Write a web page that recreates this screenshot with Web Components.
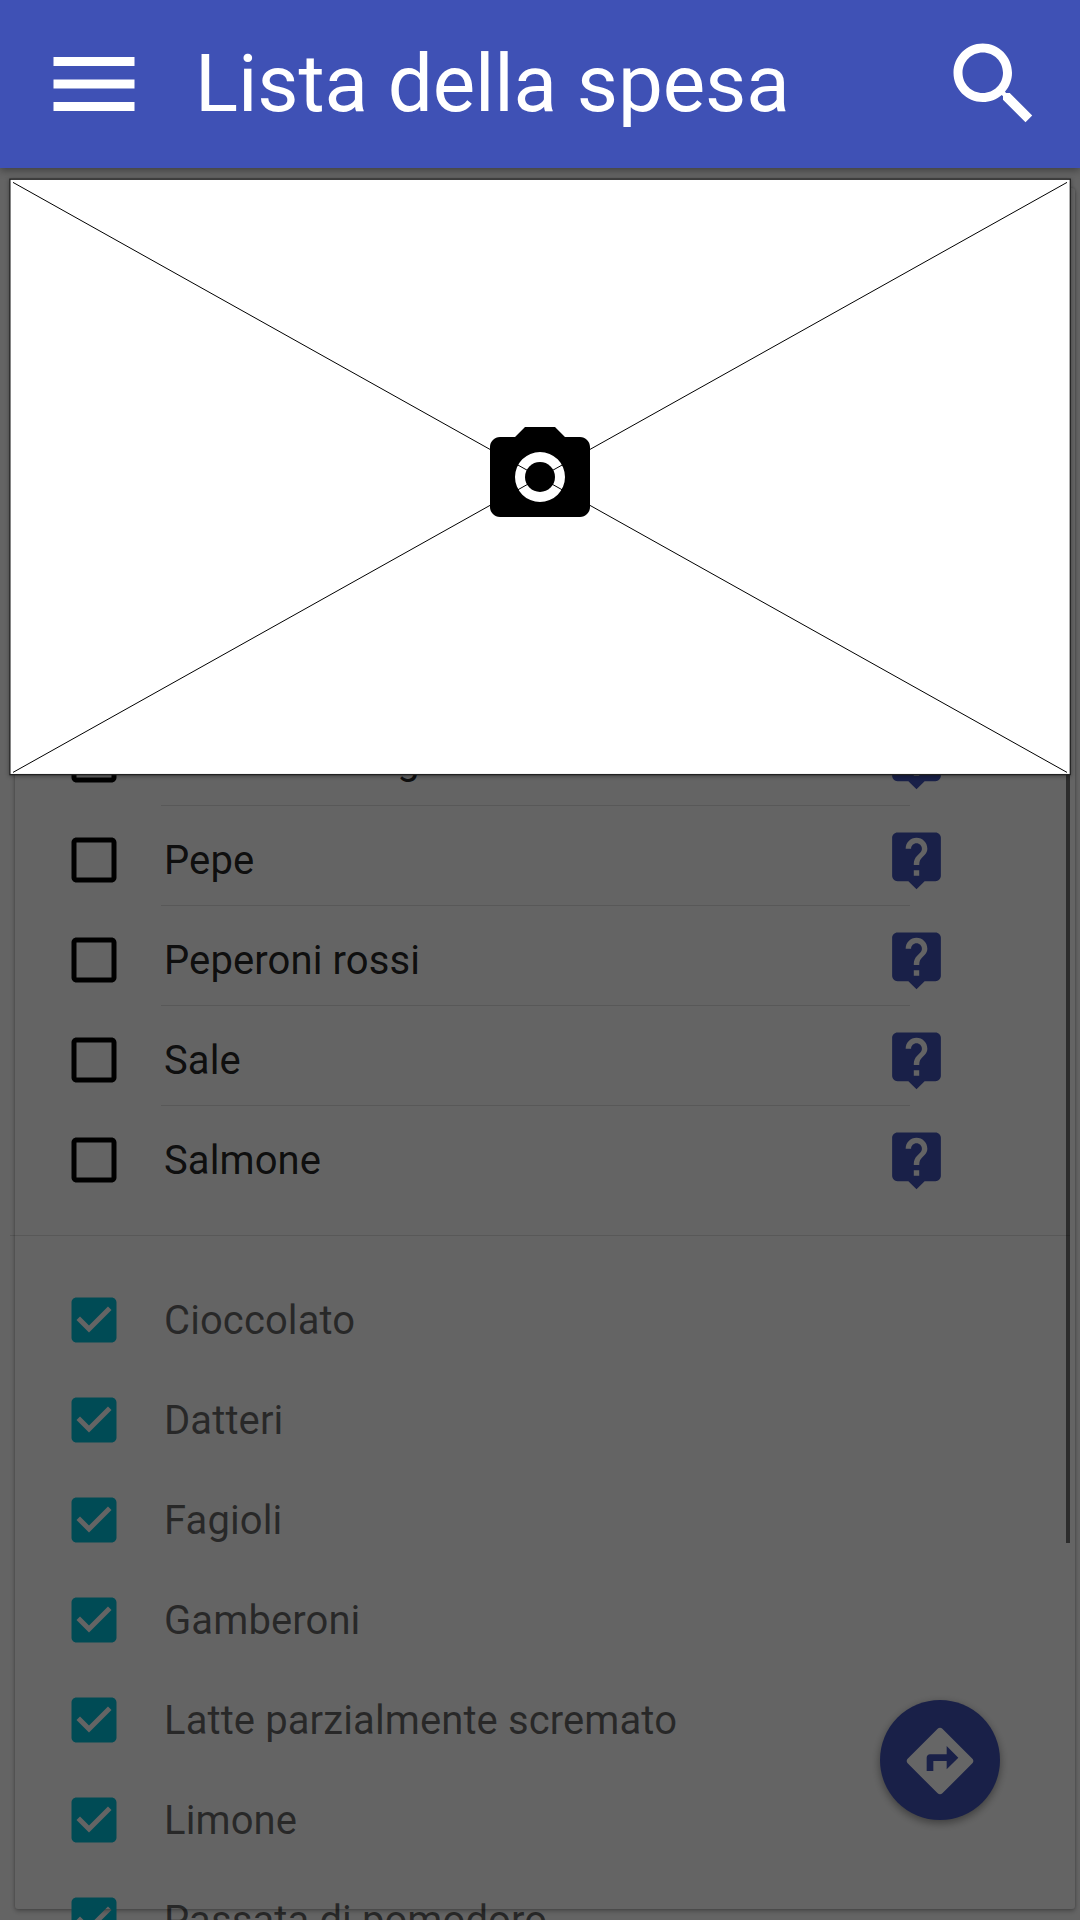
<!DOCTYPE html>
<html lang="it">
<head>
<meta charset="utf-8">
<title>Lista della spesa</title>
<style>
html,body{margin:0;height:1920px;overflow:hidden;background:#fafafa;font-family:Roboto,sans-serif}
</style>
</head>
<body>
<shopping-app>
  <app-bar slot="bar">Lista della spesa</app-bar>
  <photo-frame slot="photo"></photo-frame>
  <list-group slot="list" divided>
    <list-item>Olio extra vergine</list-item>
    <list-item>Pepe</list-item>
    <list-item>Peperoni rossi</list-item>
    <list-item>Sale</list-item>
    <list-item>Salmone</list-item>
  </list-group>
  <list-group slot="list">
    <list-item checked>Cioccolato</list-item>
    <list-item checked>Datteri</list-item>
    <list-item checked>Fagioli</list-item>
    <list-item checked>Gamberoni</list-item>
    <list-item checked>Latte parzialmente scremato</list-item>
    <list-item checked>Limone</list-item>
    <list-item checked>Passata di pomodoro</list-item>
  </list-group>
  <fab-button slot="fab"></fab-button>
</shopping-app>
<script>
const define = (name, html) => customElements.define(name, class extends HTMLElement {
  constructor() {
    super();
    this.attachShadow({mode: 'open'});
    this.shadowRoot.innerHTML = html;
  }
});

define('shopping-app', `
<style>
:host{display:flex;flex-direction:column;position:relative;width:1080px;height:1920px;overflow:hidden;background:#fafafa}
main{flex:1;min-height:0;position:relative;overflow:hidden}
.card{position:absolute;left:15px;top:20px;width:1060px;height:1721px;background:#fafafa;border-radius:3px;box-shadow:0 2px 5px rgba(0,0,0,.28),0 0 3px rgba(0,0,0,.2)}
.scroll{position:relative;margin:0 10px;padding-top:537px}
.thumb{position:absolute;left:1066px;top:20px;width:4px;height:1355px;background:rgba(0,0,0,.56)}
.shade{position:absolute;inset:0;background:rgba(0,0,0,.6)}
slot[name=fab]::slotted(*){position:absolute;left:880px;top:1532px}
slot[name=photo]::slotted(*){position:absolute;left:9px;top:10px}
</style>
<slot name="bar"></slot>
<main>
  <div class="card"></div>
  <div class="scroll"><slot name="list"></slot></div>
  <div class="thumb"></div>
  <slot name="fab"></slot>
  <div class="shade"></div>
  <slot name="photo"></slot>
</main>`);

define('app-bar', `
<style>
:host{display:flex;align-items:center;flex:none;box-sizing:border-box;height:168px;padding:0 32px 0 40px;background:#3f51b5;color:#fff;font-size:80px;line-height:96px;letter-spacing:-.12px;position:relative;z-index:2;box-shadow:0 2px 8px rgba(0,0,0,.4)}
svg{width:108px;height:108px;fill:currentColor;flex:none}
span{flex:1;margin-left:47px;white-space:nowrap}
</style>
<svg viewBox="0 0 24 24"><path d="M3 18h18v-2H3v2zm0-5h18v-2H3v2zm0-7v2h18V6H3z"/></svg>
<span><slot></slot></span>
<svg viewBox="0 0 24 24"><path d="M15.5 14h-.79l-.28-.27C15.41 12.59 16 11.11 16 9.5 16 5.91 13.09 3 9.5 3S3 5.91 3 9.5 5.91 16 9.5 16c1.61 0 3.09-.59 4.23-1.57l.27.28v.79l5 4.99L20.49 19l-4.99-5zm-6 0C7.01 14 5 11.99 5 9.5S7.01 5 9.5 5 14 7.01 14 9.5 11.99 14 9.5 14z"/></svg>`);

define('list-group', `
<style>
:host{display:block}
:host([divided]){padding-bottom:30px;margin-bottom:29px;border-bottom:1px solid rgba(0,0,0,.12)}
</style><slot></slot>`);

define('list-item', `
<style>
:host{display:flex;align-items:center;box-sizing:border-box;height:100px;padding:10px 0 0 54px;font-size:40px;line-height:48px;letter-spacing:.1px;color:rgba(0,0,0,.87);position:relative}
:host([checked]){color:rgba(0,0,0,.6)}
svg{flex:none;display:block}
.box{width:60px;height:60px;fill:#000}
:host([checked]) .box{fill:#00bcd4}
.on,:host([checked]) .off,:host([checked]) .help,:host([checked]) i{display:none}
:host([checked]) .on{display:inline}
span{width:669px;margin:2px 0 0 40px;white-space:nowrap}
.help{width:65px;height:65px;margin:-1px 0 0 51px;fill:#3f51b5}
i{position:absolute;left:151px;bottom:-1px;width:749px;height:1px;background:rgba(0,0,0,.12)}
:host(:nth-child(5)) i{display:none}
</style>
<svg class="box" viewBox="0 0 24 24">
<path class="off" d="M19 5v14H5V5h14m0-2H5c-1.1 0-2 .9-2 2v14c0 1.1.9 2 2 2h14c1.1 0 2-.9 2-2V5c0-1.1-.9-2-2-2z"/>
<path class="on" d="M19 3H5c-1.11 0-2 .9-2 2v14c0 1.1.89 2 2 2h14c1.11 0 2-.9 2-2V5c0-1.1-.89-2-2-2zm-9 14l-5-5 1.41-1.41L10 14.17l7.59-7.59L19 8l-9 9z"/>
</svg>
<span><slot></slot></span>
<svg class="help" viewBox="0 0 24 24"><path d="M19 2H5c-1.11 0-2 .9-2 2v14c0 1.1.89 2 2 2h4l3 3 3-3h4c1.1 0 2-.9 2-2V4c0-1.1-.9-2-2-2zm-6 16h-2v-2h2v2zm2.07-7.75l-.9.92C13.45 11.9 13 12.5 13 14h-2v-.5c0-1.1.45-2.1 1.17-2.83l1.24-1.26c.37-.36.59-.86.59-1.41 0-1.1-.9-2-2-2s-2 .9-2 2H8c0-2.21 1.79-4 4-4s4 1.79 4 4c0 .88-.36 1.68-.93 2.25z"/></svg>
<i></i>`);

define('fab-button', `
<style>
:host{display:flex;align-items:center;justify-content:center;width:120px;height:120px;border-radius:50%;background:#3f51b5;box-shadow:0 3px 9px rgba(0,0,0,.4)}
svg{width:80px;height:80px;fill:#fff;margin-top:2px}
</style>
<svg viewBox="0 0 24 24"><path d="M21.71 11.29l-9-9c-.39-.39-1.02-.39-1.41 0l-9 9c-.39.39-.39 1.02 0 1.41l9 9c.39.39 1.02.39 1.41 0l9-9c.39-.38.39-1.01 0-1.41zM14 14.5V12h-4v3H8v-4c0-.55.45-1 1-1h5V7.5l3.5 3.5-3.5 3.5z"/></svg>`);

define('photo-frame', `
<style>
:host{display:block;width:1063px;height:598px}
svg{display:block;width:100%;height:100%;filter:drop-shadow(0 1px 2px rgba(0,0,0,.35));overflow:visible}
</style>
<svg viewBox="9 178 1063 598">
<rect x="9.9" y="179.2" width="1060.4" height="595.4" fill="#fff" stroke="#222" stroke-width="1.3"/>
<path d="M13 182.4L1067 772.4M1067 182.4L13 772.4" stroke="#000" stroke-width="1" fill="none"/>
<path fill-rule="evenodd" transform="translate(480 417) scale(5)" d="M9 2L7 4H4c-1.1 0-2 .9-2 2v12c0 1.1.9 2 2 2h16c1.1 0 2-.9 2-2V6c0-1.1-.9-2-2-2h-3l-2-2H9zM12 7a5 5 0 1 0 0 10 5 5 0 0 0 0-10z"/>
<circle cx="540" cy="477" r="15"/>
</svg>`);
</script>
</body>
</html>
